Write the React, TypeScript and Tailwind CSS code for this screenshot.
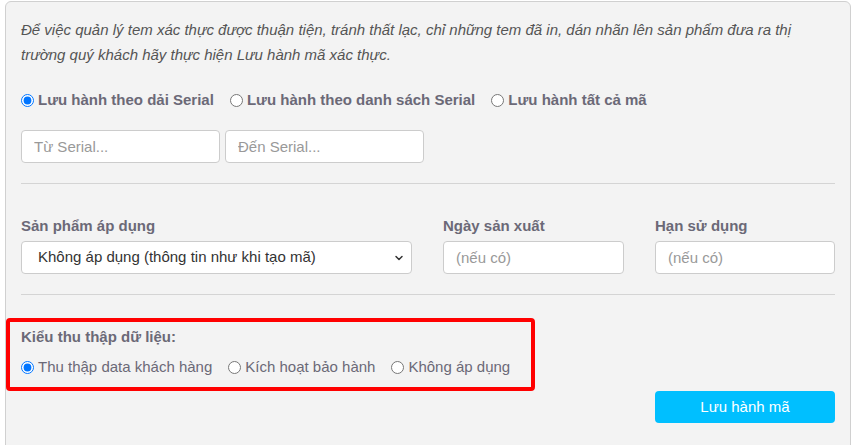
import { ChevronDown } from "lucide-react";

function Radio({ name, label, checked, bold }: { name: string; label: string; checked?: boolean; bold?: boolean }) {
  return (
    <label className={`flex items-center gap-[4px] ${bold ? "font-bold" : ""}`}>
      <input type="radio" name={name} defaultChecked={checked} className="m-0 h-[13px] w-[13px]" />
      <span>{label}</span>
    </label>
  );
}

function App() {
  return (
    <main className="min-h-screen bg-white pt-px pl-[5px] font-['Liberation_Sans',Arial,sans-serif] text-[15px]">
      <div className="w-[846px] h-[460px] rounded-md border border-[#d0d0d0] bg-[#f3f3f3] px-[15px] pt-[15px]">
        <p className="italic text-[#555] leading-[25px]">
          Để việc quản lý tem xác thực được thuận tiện, tránh thất lạc, chỉ những tem đã in, dán nhãn lên sản phẩm đưa ra thị trường quý khách hãy thực hiện Lưu hành mã xác thực.
        </p>

        {/* chon kieu luu hanh */}
        <div className="mt-[23px] flex gap-[16px] text-[#6b6977] leading-[20px]">
          <Radio name="mode" label="Lưu hành theo dải Serial" checked bold />
          <Radio name="mode" label="Lưu hành theo danh sách Serial" bold />
          <Radio name="mode" label="Lưu hành tất cả mã" bold />
        </div>

        <div className="mt-[20px] flex gap-[5px]">
          <input
            type="text"
            placeholder="Từ Serial..."
            className="h-[33px] w-[199px] rounded border border-[#ccc] bg-white px-[12px] placeholder:text-[#999] outline-none"
          />
          <input
            type="text"
            placeholder="Đến Serial..."
            className="h-[33px] w-[199px] rounded border border-[#ccc] bg-white px-[12px] placeholder:text-[#999] outline-none"
          />
        </div>

        <hr className="mt-[20px] border-t border-[#d4d4d4]" />

        <div className="mt-[32px] flex gap-[31px]">
          <div className="w-[391px] shrink-0">
            <div className="font-bold text-[#6b6977] leading-[20px]">Sản phẩm áp dụng</div>
            <div className="relative mt-[5px]">
              <select className="h-[33px] w-full appearance-none rounded border border-[#ccc] bg-white pl-[16px] text-[#333] outline-none">
                <option>Không áp dụng (thông tin như khi tạo mã)</option>
              </select>
              <ChevronDown className="pointer-events-none absolute right-[7px] top-[11px] h-[12px] w-[12px] text-[#333]" strokeWidth={3} />
            </div>
          </div>
          <div className="w-[181px] shrink-0">
            <div className="font-bold text-[#6b6977] leading-[20px]">Ngày sản xuất</div>
            <input
              type="text"
              placeholder="(nếu có)"
              className="mt-[5px] h-[33px] w-full rounded border border-[#ccc] bg-white px-[12px] placeholder:text-[#999] outline-none"
            />
          </div>
          <div className="w-[180px] shrink-0">
            <div className="font-bold text-[#6b6977] leading-[20px]">Hạn sử dụng</div>
            <input
              type="text"
              placeholder="(nếu có)"
              className="mt-[5px] h-[33px] w-full rounded border border-[#ccc] bg-white px-[12px] placeholder:text-[#999] outline-none"
            />
          </div>
        </div>

        <hr className="mt-[20px] border-t border-[#d4d4d4]" />

        {/* kieu thu thap du lieu */}
        <div className="-ml-[15px] mt-[23px] w-[529px] rounded-sm border-4 border-[#ff0000] pl-[11px] pt-[5px] pb-[10px] text-[#6b6977]">
          <div className="font-bold leading-[20px]">Kiểu thu thập dữ liệu:</div>
          <div className="mt-[10px] flex gap-[16px] leading-[20px]">
            <Radio name="collect" label="Thu thập data khách hàng" checked />
            <Radio name="collect" label="Kích hoạt bảo hành" />
            <Radio name="collect" label="Không áp dụng" />
          </div>
        </div>

        <div className="flex justify-end">
          <button className="h-[32px] w-[180px] rounded-sm bg-[#00bfff] text-white">Lưu hành mã</button>
        </div>
      </div>
    </main>
  );
}

export default App;
